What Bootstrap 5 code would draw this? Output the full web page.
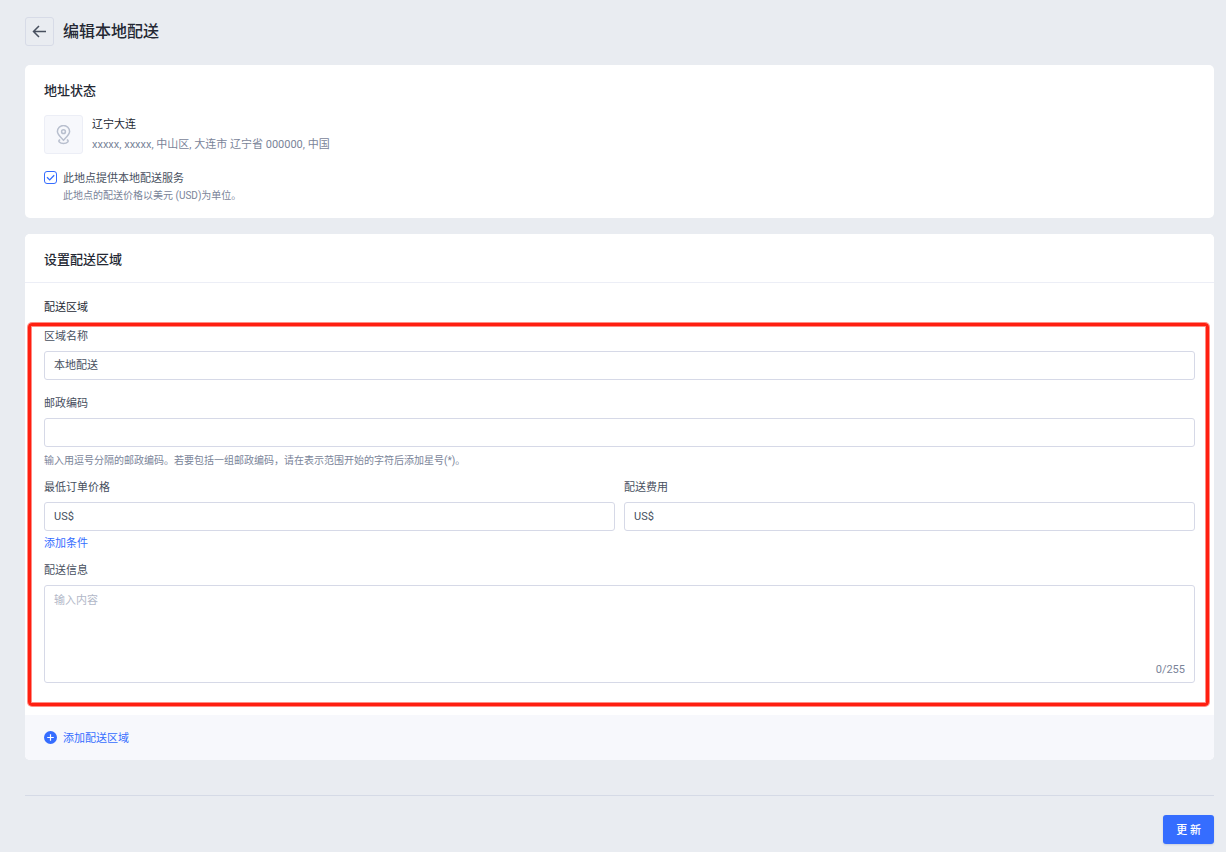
<!DOCTYPE html>
<html lang="zh-CN">
<head>
<meta charset="utf-8">
<meta name="viewport" content="width=device-width, initial-scale=1">
<title>编辑本地配送</title>
<link href="https://cdn.jsdelivr.net/npm/bootstrap@5.3.0/dist/css/bootstrap.min.css" rel="stylesheet">
<style>
  body { background: #e9ecf1; color: #242833; font: 11px/20px Roboto, "Noto Sans CJK SC", sans-serif; }
  .page { padding: 17px 12px 8px 25px; }
  .page-head { gap: 9px; }
  .page-title { font-size: 16px; font-weight: 500; line-height: 30px; margin: 0; }
  .back-btn { width: 29px; height: 29px; border: 1px solid #d7dbe7; border-radius: 3px; }
  .panel { border: 0; border-radius: 5px; color: inherit; overflow: hidden; }
  .panel-title { font-size: 13px; font-weight: 500; line-height: 20px; margin: 0; }
  .status-panel { padding: 16px 19px 15px; margin: 18px 0 16px; }
  .place { margin: 14px 0; gap: 9px; }
  .place-icon { width: 39px; height: 39px; background: #f7f8fc; border: 1px solid #eceef6; border-radius: 3px; }
  .muted { color: #7a8499; }
  .ink { color: #474f5e; }
  .hint { font-size: 10px; line-height: 14px; }
  .check { gap: 6px; }
  .check .form-check-input { width: 13px; height: 13px; margin: 2px 0 0; border-radius: 3px; border-color: #356dff; float: none; }
  .check .form-check-input:checked { background-color: #fff; background-image: url("data:image/svg+xml,%3Csvg xmlns='http://www.w3.org/2000/svg' viewBox='0 0 11 11'%3E%3Cpath d='M2 5.200 4.700 7.900 9.200 3.200' fill='none' stroke='%23356dff' stroke-width='1.3'/%3E%3C/svg%3E"); }
  .zone-head { background: #fff; border-bottom: 1px solid #eceef6; padding: 16px 19px 12px; }
  .zone-label { padding: 15px 19px 5px; }
  .zone-form { margin: 0 5px 9px 3px; border: 3px solid #ff1f10; border-radius: 4px; box-shadow: 0 0 0 1px #ff8d85, inset 0 0 0 1px #ff8d85; padding: 1px 11px 20px 13px; }
  .zone-form .form-label { display: block; margin: 0 0 4px; color: #474f5e; }
  .zone-form .form-control { min-height: 29px; padding: 4px 9px 3px; font-size: 11px; line-height: 20px; color: #474f5e; border: 1px solid #d6d9e7; border-radius: 3px; }
  .zone-form textarea.form-control { display: block; height: 98px; padding-top: 5px; resize: none; }
  .zone-form .form-control::placeholder { color: #b2b8c8; }
  .field { margin-bottom: 14px; }
  .field-hint { margin: 7px 0 10px; }
  .pair { gap: 9px; }
  .blue-link { color: #356dff; text-decoration: none; }
  .more { margin: 3px 0 7px; }
  .counter { position: absolute; right: 10px; bottom: 3px; }
  .zone-foot { background: #f7f8fc; padding: 14px 19px 11px; }
  .zone-foot a { gap: 6px; }
  .zone-foot svg { margin-top: 2px; }
  .actions { border-top: 1px solid #d5dae6; margin-top: 35px; padding-top: 19px; }
  .save-btn { background: #356dff; color: #fff; font-size: 11px; font-weight: 500; line-height: 20px; border: 0; border-radius: 3px; padding: 6px 13px 3px; box-shadow: 0 1px 2px #c9cfdd; }
  .save-btn:hover { background: #245be8; color: #fff; }
</style>
</head>
<body>
<main class="page">
  <header class="page-head d-flex align-items-start">
    <button type="button" class="back-btn btn p-0 d-flex align-items-center justify-content-center" aria-label="返回">
      <svg width="15" height="15" viewBox="0 0 15 15" fill="none" stroke="#474f5e" stroke-width="1.5"><path d="M14 7.5H1.7M7 2 1.5 7.5 7 13"/></svg>
    </button>
    <h1 class="page-title">编辑本地配送</h1>
  </header>

  <section class="card panel status-panel">
    <h2 class="panel-title">地址状态</h2>
    <div class="place d-flex">
      <div class="place-icon d-flex align-items-center justify-content-center flex-shrink-0">
        <svg width="15" height="20" viewBox="0 0 15 20" fill="none" stroke="#b8bfce" stroke-width="1.5"><path d="M7.5 15.2C4 11.7 1.400 9.500 1.400 6.600a6.100 6.100 0 0 1 12.200 0C13.600 9.500 11 11.700 7.500 15.200Z"/><circle cx="7.500" cy="6.700" r="1.900"/><path d="M4.200 14.800c-1.500.4-1.700 1.400-.9 2.200 1.800 1.900 6.600 1.900 8.400 0 .8-.8.6-1.800-.9-2.200"/></svg>
      </div>
      <div>
        <div>辽宁大连</div>
        <div class="muted">xxxxx, xxxxx, 中山区, 大连市 辽宁省 000000, 中国</div>
      </div>
    </div>
    <div class="check d-flex">
      <input class="form-check-input flex-shrink-0" type="checkbox" id="local" checked>
      <div>
        <label class="ink d-block" for="local">此地点提供本地配送服务</label>
        <div class="hint muted">此地点的配送价格以美元 (USD)为单位。</div>
      </div>
    </div>
  </section>

  <section class="card panel">
    <div class="zone-head"><h2 class="panel-title">设置配送区域</h2></div>
    <div class="zone-label">配送区域</div>
    <form class="zone-form">
      <div class="field">
        <label class="form-label" for="name">区域名称</label>
        <input class="form-control" id="name" type="text" value="本地配送">
      </div>
      <label class="form-label" for="zip">邮政编码</label>
      <input class="form-control" id="zip" type="text">
      <div class="field-hint hint muted">输入用逗号分隔的邮政编码。若要包括一组邮政编码，请在表示范围开始的字符后添加星号(*)。</div>
      <div class="pair d-flex">
        <div class="flex-fill">
          <label class="form-label" for="min">最低订单价格</label>
          <input class="form-control" id="min" type="text" value="US$">
        </div>
        <div class="flex-fill">
          <label class="form-label" for="fee">配送费用</label>
          <input class="form-control" id="fee" type="text" value="US$">
        </div>
      </div>
      <div class="more"><a class="blue-link" href="#">添加条件</a></div>
      <label class="form-label" for="info">配送信息</label>
      <div class="position-relative">
        <textarea class="form-control" id="info" placeholder="输入内容" maxlength="255"></textarea>
        <span class="counter muted">0/255</span>
      </div>
    </form>
    <div class="zone-foot d-flex">
      <a class="blue-link d-flex align-items-start" href="#">
        <svg width="13" height="13" viewBox="0 0 13 13"><circle cx="6.500" cy="6.500" r="6.500" fill="#356dff"/><path d="M6.500 3.200v6.600M3.200 6.500h6.600" stroke="#fff" stroke-width="1.200"/></svg>
        添加配送区域
      </a>
    </div>
  </section>

  <footer class="actions d-flex justify-content-end">
    <button type="button" class="btn save-btn">更 新</button>
  </footer>
</main>
<script src="https://cdn.jsdelivr.net/npm/bootstrap@5.3.0/dist/js/bootstrap.bundle.min.js"></script>
</body>
</html>
